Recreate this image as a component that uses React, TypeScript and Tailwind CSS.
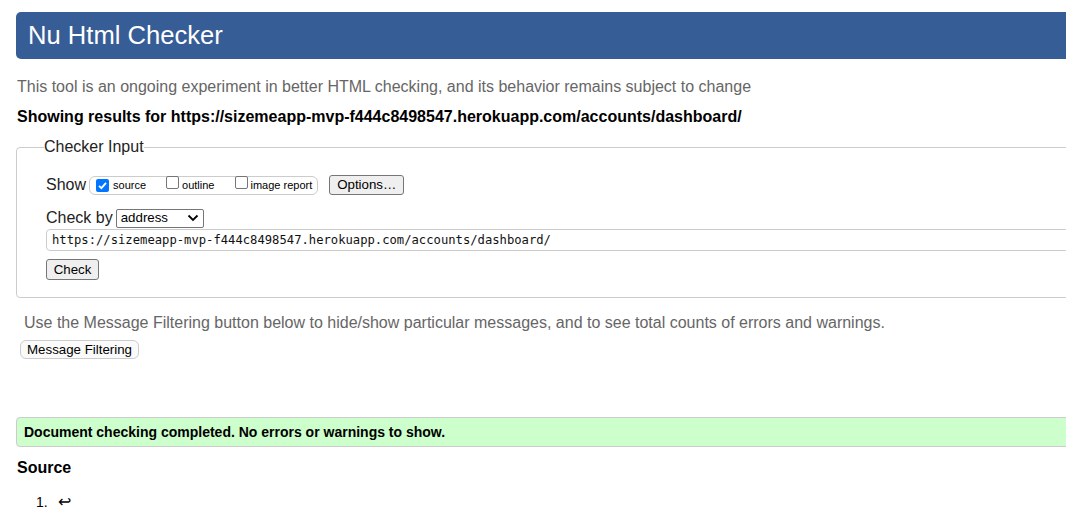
import React from "react";

function Check({ checked }: { checked?: boolean }) {
  return checked ? (
    <span className="inline-flex h-[13px] w-[13px] items-center justify-center rounded-[2px] bg-[#0075ff]">
      <svg width="11" height="11" viewBox="0 0 11 11">
        <path d="M2 5.8 L4.4 8.2 L9 2.8" fill="none" stroke="white" strokeWidth="1.8" />
      </svg>
    </span>
  ) : (
    <span className="inline-block h-[13px] w-[13px] rounded-[2px] border border-[#767676] bg-white" />
  );
}

export default function App() {
  return (
    <div className="w-[1066px] h-[508px] overflow-hidden bg-white text-black" style={{ fontFamily: '"Liberation Sans", Arial, sans-serif' }}>
      <div className="w-[1200px] pl-4 pt-3">
        <div className="h-[47px] rounded-l-[5px] bg-[#365d95] pl-3 flex items-center">
          <h1 className="text-[25.6px] leading-none text-white">Nu Html Checker</h1>
        </div>
        <p className="mt-[19px] pl-[1px] text-[16px] leading-[18px] text-[#666]">
          This tool is an ongoing experiment in better HTML checking, and its behavior remains subject to change
        </p>
        <p className="mt-[12px] pl-[1px] text-[16px] leading-[18px] font-bold">
          Showing results for https://sizemeapp-mvp-f444c8498547.herokuapp.com/accounts/dashboard/
        </p>
        <fieldset className="mt-[12px] h-[160px] rounded-l-[4px] border border-[#ccc] pl-[29px]">
          <legend className="-ml-[2px] text-[16px] leading-[18px] text-[#222]">Checker Input</legend>
          <div className="mt-[19px] flex items-center h-[20px]">
            <span className="text-[16px] leading-[18px] text-[#222]">Show</span>
            <div className="ml-[3px] flex h-[19px] items-center rounded-[6px] border border-[#ccc] pl-[6px] pr-[5px] text-[11px]">
              <Check checked />
              <span className="ml-[4px]">source</span>
              <span className="ml-[20px]"><Check /></span>
              <span className="ml-[3px]">outline</span>
              <span className="ml-[21px]"><Check /></span>
              <span className="ml-[2px]">image report</span>
            </div>
            <div className="ml-[11px] flex h-[20px] w-[75px] items-center justify-center rounded-[3px] border border-[#767676] bg-[#efefef] text-[13.3px]">
              Options…
            </div>
          </div>
          <div className="mt-[13px] flex items-center h-[20px]">
            <span className="text-[16px] leading-[18px] text-[#222]">Check by</span>
            <div className="ml-[3px] flex h-[19px] w-[88px] items-center justify-between rounded-[2px] border border-[#767676] bg-white pl-[4px] pr-[4px] text-[13.3px]">
              <span>address</span>
              <svg width="12" height="8" viewBox="0 0 12 8">
                <path d="M1.5 1.5 L6 6 L10.5 1.5" fill="none" stroke="black" strokeWidth="1.8" />
              </svg>
            </div>
          </div>
          <div className="mt-[1px] flex h-[22px] items-center rounded-l-[4px] border border-[#ccc] pl-[5px] text-[12.2px] text-[#111]" style={{ fontFamily: '"DejaVu Sans Mono", "Liberation Mono", monospace' }}>
            https://sizemeapp-mvp-f444c8498547.herokuapp.com/accounts/dashboard/
          </div>
          <div className="mt-[8px] flex h-[21px] w-[53px] items-center justify-center rounded-[3px] border border-[#767676] bg-[#efefef] text-[13.3px]">
            Check
          </div>
        </fieldset>
        <p className="mt-[16px] pl-[8px] text-[16px] leading-[18px] text-[#666]">
          Use the Message Filtering button below to hide/show particular messages, and to see total counts of errors and warnings.
        </p>
        <div className="mt-[8px] ml-[4px] flex h-[19px] w-[119px] items-center justify-center rounded-[6px] border border-[#ccc] bg-[#fafafa] text-[13.3px]">
          Message Filtering
        </div>
        <div className="mt-[58px] flex h-[30px] items-center rounded-l-[4px] border border-[#ccc] bg-[#ccffcc] pl-[7px] text-[14px] font-bold">
          Document checking completed. No errors or warnings to show.
        </div>
        <h2 className="mt-[12px] pl-[1px] text-[16px] leading-[18px] font-bold">Source</h2>
        <div className="mt-[17px] flex items-center pl-[20px] text-[14px] leading-[16px]">
          <span className="w-[22px]">1.</span>
          <span className="text-[16px]">↩</span>
        </div>
      </div>
    </div>
  );
}
